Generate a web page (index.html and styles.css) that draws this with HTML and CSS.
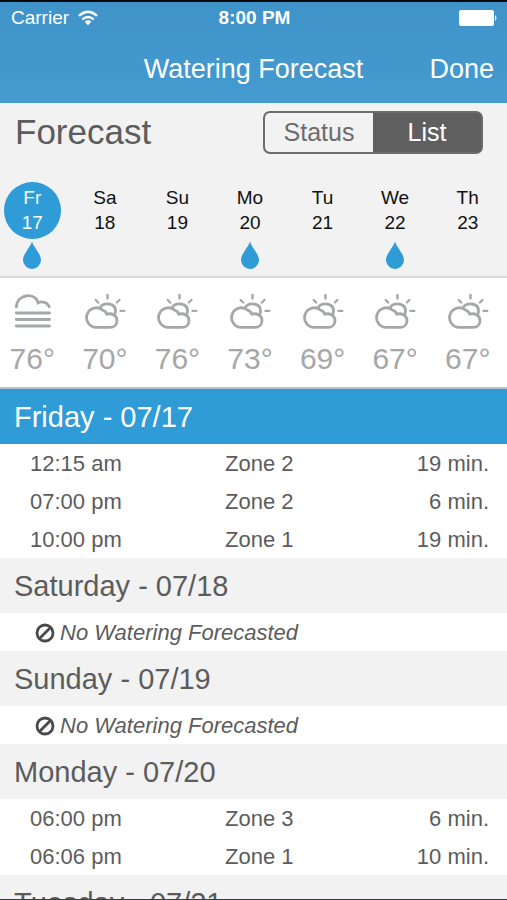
FILE: index.html
```html
<!DOCTYPE html>
<html lang="en">
<head>
  <meta charset="UTF-8" />
  <meta name="viewport" content="width=device-width, initial-scale=1" />
  <title>Watering Forecast</title>
  <link rel="stylesheet" href="styles.css">
</head>
<body>

  <!-- Shared icons -->
  <svg class="icon-defs" aria-hidden="true">
    <symbol id="drop" viewBox="0 0 18 28">
      <path d="M9 0.5 C10.2 5.5 18 13 18 19 A9 9 0 0 1 0 19 C0 13 7.8 5.5 9 0.5 Z" fill="#2f9bd7" />
    </symbol>
    <symbol id="fog" viewBox="0 0 42 38">
      <g fill="none" stroke="#a5a7a8" stroke-width="2.8" stroke-linecap="round">
        <path d="M5.3 14.8 C6.3 1 25 0.5 27 10.8 C31 8.6 36.5 10.4 38.2 14.6" />
        <path d="M5.3 21 H38.5 M5.3 27.5 H38.5 M5.3 34 H38.5" />
      </g>
    </symbol>
    <symbol id="partly" viewBox="0 0 42 38">
      <g fill="none" stroke="#a5a7a8" stroke-width="2.8" stroke-linecap="round" stroke-linejoin="round">
        <path d="M12.5 35.4 A9.8 9.8 0 1 1 18.8 18.2 Q21.8 19.2 22.8 22.2 C28 20.6 33 23.8 33 28.4 C33 32.8 29.8 35.4 26 35.4 Z" />
        <path d="M16 15.8 C19 10 31.7 10.4 31.5 19 Q31.4 21.2 30.6 22.8" />
        <path stroke-width="2.4" d="M23.5 3 V6.4 M11.7 8 L14.2 10.5 M35.4 8 L32.9 10.5 M36.6 18.9 H40.2" />
      </g>
    </symbol>
    <symbol id="none" viewBox="0 0 20 20">
      <g fill="none" stroke="#4a4a4a" stroke-width="2.8">
        <circle cx="10" cy="10" r="8" />
        <path d="M4.5 15.5 L15.5 4.5" />
      </g>
    </symbol>
  </svg>

  <div class="app">

    <header class="top-bar">
      <div class="status-bar">
        <span class="carrier">
          Carrier
          <svg class="wifi" viewBox="0 0 20 16" aria-hidden="true">
            <g fill="none" stroke="#fff" stroke-width="2.4">
              <path d="M1 5.8 Q10 -2.2 19 5.8" />
              <path d="M4.2 9.4 Q10 4.4 15.8 9.4" />
            </g>
            <path d="M6.6 11.6 Q10 8.8 13.4 11.6 L10 15.2 Z" fill="#fff" />
          </svg>
        </span>
        <strong>8:00 PM</strong>
        <svg class="battery" viewBox="0 0 39 16" aria-hidden="true">
          <rect width="35" height="16" rx="2" fill="#fff" />
          <path d="M36 5 Q39 8 36 11 Z" fill="#fff" />
        </svg>
      </div>
      <div class="nav-bar">
        <h1>Watering Forecast</h1>
        <button class="done">Done</button>
      </div>
    </header>

    <section class="calendar">
      <div class="calendar-head">
        <h2>Forecast</h2>
        <div class="segments">
          <button>Status</button>
          <button class="active">List</button>
        </div>
      </div>
      <div class="week">
        <div class="day">
          <button class="date selected">Fr<br>17</button>
          <svg class="drop"><use href="#drop" /></svg>
        </div>
        <div class="day">
          <button class="date">Sa<br>18</button>
        </div>
        <div class="day">
          <button class="date">Su<br>19</button>
        </div>
        <div class="day">
          <button class="date">Mo<br>20</button>
          <svg class="drop"><use href="#drop" /></svg>
        </div>
        <div class="day">
          <button class="date">Tu<br>21</button>
        </div>
        <div class="day">
          <button class="date">We<br>22</button>
          <svg class="drop"><use href="#drop" /></svg>
        </div>
        <div class="day">
          <button class="date">Th<br>23</button>
        </div>
      </div>
    </section>

    <section class="weather">
      <div class="week">
        <div class="day"><svg class="sky"><use href="#fog" /></svg><span>76°</span></div>
        <div class="day"><svg class="sky"><use href="#partly" /></svg><span>70°</span></div>
        <div class="day"><svg class="sky"><use href="#partly" /></svg><span>76°</span></div>
        <div class="day"><svg class="sky"><use href="#partly" /></svg><span>73°</span></div>
        <div class="day"><svg class="sky"><use href="#partly" /></svg><span>69°</span></div>
        <div class="day"><svg class="sky"><use href="#partly" /></svg><span>67°</span></div>
        <div class="day"><svg class="sky"><use href="#partly" /></svg><span>67°</span></div>
      </div>
    </section>

    <main class="schedule">
      <h3 class="today" id="fri">Friday - 07/17</h3>
      <table aria-labelledby="fri">
        <tr><td>12:15 am</td><td>Zone 2</td><td>19 min.</td></tr>
        <tr><td>07:00 pm</td><td>Zone 2</td><td>6 min.</td></tr>
        <tr><td>10:00 pm</td><td>Zone 1</td><td>19 min.</td></tr>
      </table>

      <h3>Saturday - 07/18</h3>
      <p class="empty"><svg class="none"><use href="#none" /></svg>No Watering Forecasted</p>

      <h3>Sunday - 07/19</h3>
      <p class="empty"><svg class="none"><use href="#none" /></svg>No Watering Forecasted</p>

      <h3 id="mon">Monday - 07/20</h3>
      <table aria-labelledby="mon">
        <tr><td>06:00 pm</td><td>Zone 3</td><td>6 min.</td></tr>
        <tr><td>06:06 pm</td><td>Zone 1</td><td>10 min.</td></tr>
      </table>

      <h3>Tuesday - 07/21</h3>
    </main>

  </div>

</body>
</html>
```
FILE: styles.css
```css
* {
  box-sizing: border-box;
}
body {
  margin: 0;
  background-color: white;
  color: #5c5c5c;
  font-family: "Liberation Sans", Arial, sans-serif;
}
h1, h2, h3, p {
  margin: 0;
  font-weight: normal;
}
button {
  padding: 0;
  border: none;
  background: none;
  color: inherit;
  font-family: inherit;
  cursor: pointer;
}
svg {
  display: block;
  flex-shrink: 0;
}
.icon-defs {
  display: none;
}
.app {
  display: flex;
  flex-direction: column;
  height: 100vh;
  overflow: hidden;
  border-top: 2px solid #05090c;
  border-bottom: 1px solid #3c3c3e;
}
.top-bar, .calendar, .weather {
  flex-shrink: 0;
}

/* Header */
.top-bar {
  background: linear-gradient(#3f93c9, #449bd0);
  color: white;
}
.status-bar {
  display: grid;
  grid-template-columns: 1fr auto 1fr;
  align-items: center;
  height: 32px;
  padding: 0 9px 0 11px;
  font-size: 19px;
}
.carrier {
  display: flex;
  align-items: center;
  gap: 9px;
}
.wifi {
  width: 20px;
  height: 16px;
}
.battery {
  width: 39px;
  height: 16px;
  justify-self: end;
}
.nav-bar {
  display: grid;
  grid-template-columns: 1fr auto 1fr;
  align-items: center;
  height: 69px;
  padding: 2px 13px 0;
  font-size: 27px;
}
.nav-bar h1 {
  grid-column: 2;
  font-size: 27px;
}
.done {
  justify-self: end;
  font-size: 27px;
}

/* Week strip */
.calendar {
  height: 175px;
  background-color: #f2f2f2;
  border-bottom: 2px solid #d9d9d9;
}
.calendar-head {
  display: flex;
  justify-content: space-between;
  align-items: center;
  height: 58px;
  padding: 0 24px 0 15px;
}
.calendar-head h2 {
  font-size: 35px;
}
.segments {
  display: flex;
  width: 220px;
  height: 43px;
  border: 2px solid #6c6c6c;
  border-radius: 7px;
  background-color: #5f5f5f;
  overflow: hidden;
}
.segments button {
  flex: 1;
  background-color: #f2f2f2;
  color: #6c6c6c;
  font-size: 25px;
}
.segments .active {
  background-color: #5f5f5f;
  color: white;
}
.week {
  display: grid;
  grid-template-columns: repeat(7, 1fr);
  margin: 0 3px 0 -4px;
}
.calendar .week {
  padding-top: 21px;
}
.day {
  display: flex;
  flex-direction: column;
  align-items: center;
}
.date {
  width: 57px;
  height: 57px;
  padding-bottom: 2px;
  border-radius: 50%;
  color: #111;
  font-size: 19px;
  line-height: 25px;
}
.date.selected {
  background-color: #2f9bd7;
  color: white;
}
.drop {
  width: 18px;
  height: 28px;
  margin-top: 2px;
}

/* Weather */
.weather {
  height: 111px;
  padding-top: 14px;
  border-bottom: 2px solid #b4c4ce;
}
.sky {
  width: 42px;
  height: 38px;
}
.weather .day {
  gap: 12px;
  color: #a5a7a8;
  font-size: 30px;
  line-height: 34px;
}

/* Schedule */
.schedule {
  flex: 1;
  min-height: 0;
  overflow: hidden;
}
.schedule h3 {
  padding: 2px 0 0 14px;
  background-color: #f2f2f2;
  font-size: 29px;
  line-height: 53px;
}
.schedule .today {
  background-color: #2f9bd7;
  color: white;
}
table {
  width: 100%;
  table-layout: fixed;
  border-collapse: collapse;
  font-size: 22px;
}
td {
  height: 38px;
  padding: 2px 0 0;
}
td:first-child {
  width: 225px;
  padding-left: 30px;
}
td:last-child {
  padding-right: 18px;
  text-align: right;
}
.empty {
  display: flex;
  align-items: center;
  gap: 5px;
  height: 38px;
  padding: 2px 0 0 35px;
  font-size: 22px;
  font-style: italic;
}
.none {
  width: 20px;
  height: 20px;
}
```
